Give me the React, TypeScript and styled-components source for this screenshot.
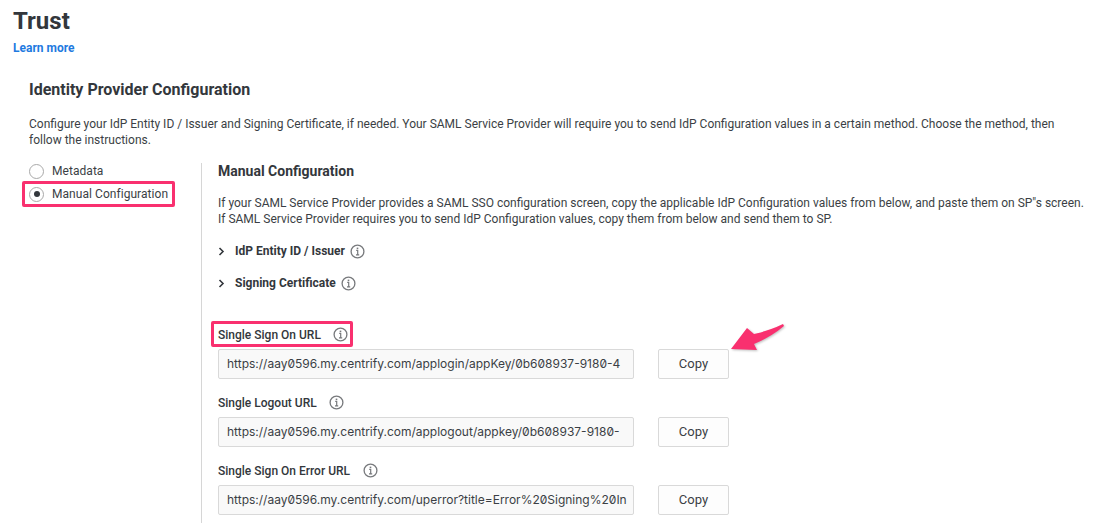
import styled, { createGlobalStyle } from 'styled-components';

const GlobalStyle = createGlobalStyle`
  html, body {
    margin: 0;
    background: #fff;
    overflow: hidden;
  }

  body {
    color: #3b3f45;
    font-family: Roboto, "Liberation Sans", sans-serif;
  }
`;

const Page = styled.div`
  height: 529px;
  overflow: hidden;
  padding: 9px 0 0 13px;
  position: relative;
  box-sizing: border-box;
  width: 1097px;
`;

const Title = styled.h1`
  color: #33373c;
  font-size: 24px;
  font-weight: 700;
  line-height: 24px;
  margin: 0;
`;

const LearnMore = styled.a`
  color: #1f7ae0;
  display: block;
  font-size: 12px;
  font-weight: 700;
  line-height: 14px;
  margin-top: 8px;
`;

const Section = styled.section`
  padding: 25px 0 0 16px;
`;

const Heading = styled.h2`
  color: #33373c;
  font-size: 16px;
  font-weight: 700;
  line-height: 20px;
  margin: 0;
`;

const Intro = styled.p`
  font-size: 12px;
  line-height: 16px;
  margin: 16px 0 0;
  width: 1040px;
`;

const Columns = styled.div`
  display: flex;
  margin-top: 15px;
`;

const Side = styled.div`
  display: flex;
  flex: none;
  flex-direction: column;
  margin-top: -5px;
  width: 172px;
`;

const RadioRow = styled.label<{ $marked?: boolean }>`
  align-items: center;
  border: 3px solid ${({ $marked }) => ($marked ? '#f9306f' : 'transparent')};
  border-radius: 2px;
  box-sizing: border-box;
  display: flex;
  font-size: 12px;
  gap: 8px;
  height: 26px;
  letter-spacing: 0.05px;
  margin: 0 0 -3px -7px;
  padding-left: 4px;
  width: 153px;
`;

const Radio = styled.span<{ $checked?: boolean }>`
  align-items: center;
  border: 1px solid #a9a9a9;
  border-radius: 50%;
  box-sizing: border-box;
  display: flex;
  height: 15px;
  justify-content: center;
  width: 15px;

  &::after {
    background: #33373c;
    border-radius: 50%;
    content: '';
    display: ${({ $checked }) => ($checked ? 'block' : 'none')};
    height: 6px;
    width: 6px;
  }
`;

const Main = styled.div`
  border-left: 1px solid #d6d6d6;
  flex: 1;
  height: 360px;
  min-width: 0;
  padding-left: 16px;
`;

const SubHeading = styled.h3`
  color: #33373c;
  font-size: 14px;
  font-weight: 700;
  line-height: 16px;
  margin: 0;
`;

const Description = styled.p`
  font-size: 12px;
  line-height: 16px;
  margin: 16px 0 0;
  white-space: nowrap;
`;

const Expander = styled.div`
  align-items: center;
  color: #33373c;
  display: flex;
  font-size: 12px;
  font-weight: 700;
  height: 16px;
  margin-top: 16px;
`;

const Chevron = styled.svg`
  height: 9px;
  margin-right: 10px;
  width: 7px;
`;

const InfoMark = styled.svg<{ $gap: number }>`
  color: #77797c;
  flex: none;
  height: 15px;
  margin-left: ${({ $gap }) => $gap}px;
  width: 15px;
`;

const Fields = styled.div`
  display: flex;
  flex-direction: column;
  gap: 10px;
  margin-top: 30px;
`;

const Label = styled.div<{ $marked?: boolean }>`
  align-items: center;
  border: 3px solid ${({ $marked }) => ($marked ? '#f9306f' : 'transparent')};
  border-radius: 2px;
  box-sizing: border-box;
  color: #33373c;
  display: flex;
  font-size: 12px;
  font-weight: 500;
  height: 26px;
  margin: 0 0 2px -7px;
  padding: 0 2px 0 4px;
  width: fit-content;
`;

const LabelText = styled.span`
  margin-top: 2px;
`;

const FieldRow = styled.div`
  display: flex;
  gap: 24px;
`;

const UrlBox = styled.div`
  background: #f9f9f9;
  border: 1px solid #d9d9d9;
  border-radius: 2px;
  box-sizing: border-box;
  font-family: Inter, Roboto, "Liberation Sans", sans-serif;
  font-feature-settings: "zero";
  font-size: 12px;
  height: 30px;
  line-height: 28px;
  overflow: hidden;
  padding: 0 8px;
  white-space: nowrap;
  width: 416px;
`;

const CopyButton = styled.button`
  background: #fdfdfd;
  border: 1px solid #d9d9d9;
  border-radius: 2px;
  color: #3b3f45;
  font-family: Roboto, "Liberation Sans", sans-serif;
  font-size: 13px;
  height: 30px;
  padding: 0 0 2px;
  width: 71px;
`;

const Arrow = styled.svg`
  filter: drop-shadow(1px 1px 1px rgba(0, 0, 0, 0.25));
  height: 34px;
  left: 729px;
  position: absolute;
  top: 322px;
  width: 56px;
`;

const Info = ({ gap }: { gap: number }) => (
  <InfoMark $gap={gap} viewBox="0 0 15 15" fill="none" stroke="currentColor">
    <circle cx="7.5" cy="7.5" r="6.4" strokeWidth="1.3" />
    <path d="M6.2 6.4h1.5v4.2M6 10.8h3.2" strokeWidth="1.2" />
    <path d="M7.5 3.6v1.5" strokeWidth="1.6" />
  </InfoMark>
);

const Closed = () => (
  <Chevron viewBox="0 0 7 9" fill="none" stroke="#33373c" strokeWidth="1.6">
    <path d="M1.5 1l3.5 3.5L1.5 8" />
  </Chevron>
);

const urls = [
  {
    label: 'Single Sign On URL',
    gap: 12,
    marked: true,
    url: 'https://aay0596.my.centrify.com/applogin/appKey/0b608937-9180-4',
  },
  {
    label: 'Single Logout URL',
    gap: 12,
    marked: false,
    url: 'https://aay0596.my.centrify.com/applogout/appkey/0b608937-9180-',
  },
  {
    label: 'Single Sign On Error URL',
    gap: 13,
    marked: false,
    url: 'https://aay0596.my.centrify.com/uperror?title=Error%20Signing%20In',
  },
];

export default function App() {
  return (
    <Page>
      <GlobalStyle />
      <Title>Trust</Title>
      <LearnMore>Learn more</LearnMore>
      <Section>
        <Heading>Identity Provider Configuration</Heading>
        <Intro>
          Configure your IdP Entity ID / Issuer and Signing Certificate, if needed. Your SAML Service Provider will
          require you to send IdP Configuration values in a certain method. Choose the method, then follow the
          instructions.
        </Intro>
        <Columns>
          <Side>
            <RadioRow>
              <Radio />
              Metadata
            </RadioRow>
            <RadioRow $marked>
              <Radio $checked />
              Manual Configuration
            </RadioRow>
          </Side>
          <Main>
            <SubHeading>Manual Configuration</SubHeading>
            <Description>
              If your SAML Service Provider provides a SAML SSO configuration screen, copy the applicable IdP
              Configuration values from below, and paste them on SP"s screen.
              <br />
              If SAML Service Provider requires you to send IdP Configuration values, copy them from below and send them
              to SP.
            </Description>
            <Expander>
              <Closed />
              IdP Entity ID / Issuer
              <Info gap={5} />
            </Expander>
            <Expander>
              <Closed />
              Signing Certificate
              <Info gap={5} />
            </Expander>
            <Fields>
              {urls.map(({ label, gap, marked, url }) => (
                <div key={label}>
                  <Label $marked={marked}>
                    <LabelText>{label}</LabelText>
                    <Info gap={gap} />
                  </Label>
                  <FieldRow>
                    <UrlBox>{url}</UrlBox>
                    <CopyButton>Copy</CopyButton>
                  </FieldRow>
                </div>
              ))}
            </Fields>
          </Main>
        </Columns>
      </Section>
      <Arrow viewBox="0 0 56 34">
        <path d="M2 27 L18 6 L25 12 Q42 8 54 2 L55 4 Q42 15 25 22 L28 28 Z" fill="#f9306f" />
      </Arrow>
    </Page>
  );
}
